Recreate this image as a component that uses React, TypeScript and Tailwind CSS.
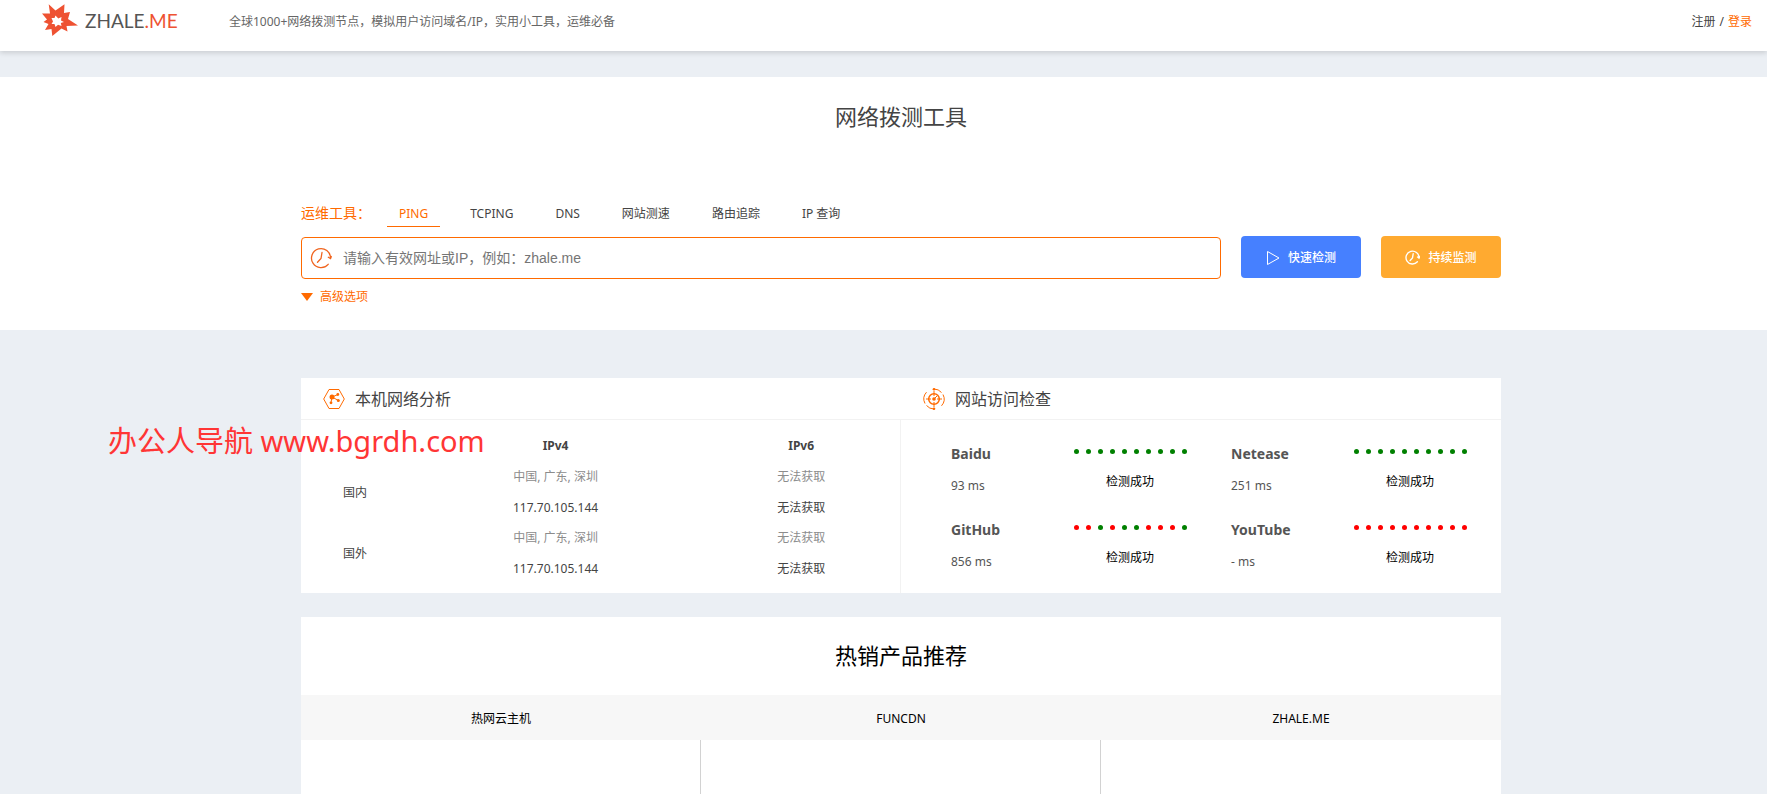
type SiteCheck = {
    name: string
    latency: string
    // one letter per probe: g = ok, r = failed
    probes: string
    status: string
}

const tools = ["PING", "TCPING", "DNS", "网站测速", "路由追踪", "IP 查询"]

const networks = [
    { region: "国内", v4Place: "中国, 广东, 深圳", v4: "117.70.105.144", v6Place: "无法获取", v6: "无法获取" },
    { region: "国外", v4Place: "中国, 广东, 深圳", v4: "117.70.105.144", v6Place: "无法获取", v6: "无法获取" },
]

const sites: SiteCheck[] = [
    { name: "Baidu", latency: "93 ms", probes: "gggggggggg", status: "检测成功" },
    { name: "Netease", latency: "251 ms", probes: "gggggggggg", status: "检测成功" },
    { name: "GitHub", latency: "856 ms", probes: "rrgrggrrrg", status: "检测成功" },
    { name: "YouTube", latency: "- ms", probes: "rrrrrrrrrr", status: "检测成功" },
]

const products = ["热网云主机", "FUNCDN", "ZHALE.ME"]

function StarLogo() {
    return (
        <svg viewBox="0 0 36 34" className="h-[34px] w-9" aria-hidden="true">
            <path
                fill="#ee5232"
                fillRule="evenodd"
                d="M6.700 .3 L13.500 6.500 L22.500 .3 L22 9 L28 8 L26 15 L36 21.500 L24.500 22 L25.500 27.500 L19.500 24.500 L10.300 32 L9.500 25 L3 26 L6.500 20 L1.500 18 L5 15.500 L0 9.500 L8 9.500 Z M13.500 11.500 L12.500 14 L9.500 14 L11 17.500 L9.500 20 L12.500 20 L13.500 23 L16 20.800 L19.500 22 L18.800 19 L22 18 L19 16.500 L19.500 13 L16.300 14.500 Z"
            />
        </svg>
    )
}

function ClockIcon({ className }: { className: string }) {
    return (
        <svg viewBox="0 0 22 22" className={className} fill="none" stroke="currentColor" strokeLinecap="round" aria-hidden="true">
            <path d="M18.200 17.300 A9.500 9.500 0 1 1 20.500 11.300" />
            <path d="M18.300 10.300 L20.500 11.600 L21.300 9.500" />
            <path d="M12 5.500 L11 11.500 L7.500 15.300" />
        </svg>
    )
}

function NetworkIcon() {
    return (
        <svg viewBox="0 0 22 22" className="size-[22px] text-[#ff6a00]" fill="none" stroke="currentColor" aria-hidden="true">
            <path d="M6 1.500 H16 L21.300 11 L16 20.500 H6 L.7 11 Z" />
            <path d="M9 9 L15 6.500 M9 9 L15.500 12.500 M9 9 L8 14.500" />
            <g fill="currentColor" stroke="none">
                <circle cx="9" cy="9" r="2.500" />
                <circle cx="14.800" cy="6.500" r="1.400" />
                <circle cx="15.300" cy="12.500" r="1.500" />
                <circle cx="8" cy="14.800" r="1.400" />
            </g>
        </svg>
    )
}

function TargetIcon() {
    return (
        <svg viewBox="0 0 22 22" className="size-[22px] text-[#ff6a00]" fill="none" stroke="currentColor" aria-hidden="true">
            <path d="M11 1 A10 10 0 0 1 18.500 4.500 M20 6.500 A10 10 0 0 1 18.500 17.800 M11 21 A10 10 0 0 1 3.500 17.500 M2 15.500 A10 10 0 0 1 3.500 4.200" />
            <circle cx="11" cy="11" r="5.300" strokeWidth="1.500" />
            <path d="M11 3 V8 M11 14 V19 M3 11 H8 M14 11 H19 M11 11 L14 8" />
            <g fill="currentColor" stroke="none">
                <circle cx="11" cy="11" r="1.800" />
                <circle cx="11" cy="1.300" r="1.300" />
                <circle cx="11" cy="20.700" r="1.300" />
            </g>
        </svg>
    )
}

function Header() {
    return (
        <header className="relative flex h-[51px] items-start justify-between bg-white pr-[15px] pl-[42px] shadow-[0_2px_5px_rgba(0,0,0,0.14)]">
            <div className="flex">
                <a href="#" className="mt-[5px] flex h-8 w-[187px] items-center gap-[7px] font-['Lato',sans-serif] text-[19px] text-[#555]">
                    <StarLogo />
                    <span>ZHALE<span className="text-[#ee5232]">.ME</span></span>
                </a>
                <p className="mt-3 leading-5 text-[#666]">
                    全球1000+网络拨测节点，模拟用户访问域名/IP，实用小工具，运维必备
                </p>
            </div>
            <nav className="mt-3 flex gap-1 leading-5">
                <a href="#register">注册</a>
                <span>/</span>
                <a href="#login" className="text-[#ff6a00]">登录</a>
            </nav>
        </header>
    )
}

function SearchPanel() {
    return (
        <section className="mt-[26px] h-[253px] bg-white pl-[35px]">
            <div className="mx-auto max-w-[1200px]">
                <h1 className="pt-[23px] text-center text-[22px] leading-8">网络拨测工具</h1>
                <div className="mt-[65px] flex items-center">
                    <span className="w-[86px] text-sm leading-8 text-[#ff6a00]">运维工具：</span>
                    <div className="flex gap-[18px]">
                        {tools.map((tool, i) => (
                            <button
                                key={tool}
                                className={`h-7 border-b px-3 pt-[3px] leading-6 ${i === 0 ? "border-[#ff6a00] text-[#ff6a00]" : "border-transparent"}`}
                            >
                                {tool}
                            </button>
                        ))}
                    </div>
                </div>
                <div className="mt-[7px] flex gap-5">
                    <label className="mt-px flex h-[42px] grow items-center gap-[11px] rounded border border-[#ff6a00] pl-2">
                        <ClockIcon className="size-[22px] stroke-[1.3] text-[#f0641e]" />
                        <input
                            type="text"
                            aria-label="网址或IP"
                            placeholder="请输入有效网址或IP，例如：zhale.me"
                            className="h-9 grow font-['Liberation_Sans','Noto_Sans_CJK_SC',sans-serif] text-sm outline-none placeholder:text-[#757575]"
                        />
                    </label>
                    <button className="flex h-[42px] w-[120px] items-center justify-center gap-2 rounded bg-[#4680ff] pt-px font-medium text-white">
                        <svg viewBox="0 0 14 16" className="h-4 w-3.5" fill="none" stroke="currentColor" aria-hidden="true">
                            <path d="M1.500 1.500 V14.500 L13 8 Z" />
                        </svg>
                        快速检测
                    </button>
                    <button className="flex h-[42px] w-[120px] items-center justify-center gap-2 rounded bg-[#ffaa30] pt-px font-medium text-white">
                        <ClockIcon className="size-[15px] stroke-2" />
                        持续监测
                    </button>
                </div>
                <button className="mt-2 flex items-center gap-[7px] leading-5 text-[#ff6a00]">
                    <svg viewBox="0 0 12 8" className="h-2 w-3" fill="currentColor" aria-hidden="true">
                        <path d="M0 0 H12 L6 8 Z" />
                    </svg>
                    高级选项
                </button>
            </div>
        </section>
    )
}

function NetworkAnalysis() {
    return (
        <section className="flex flex-col">
            <h2 className="flex h-[42px] items-center gap-2.5 border-b border-[#f2f2f2] pl-[22px] text-base">
                <NetworkIcon />
                本机网络分析
            </h2>
            <div className="grow border-r border-[#f2f2f2] pt-2.5">
                <table className="w-full table-fixed text-center leading-[30px]">
                    <colgroup>
                        <col className="w-[18%]" />
                        <col className="w-[49%]" />
                        <col />
                    </colgroup>
                    <thead>
                        <tr className="h-8">
                            <td />
                            <th>IPv4</th>
                            <th>IPv6</th>
                        </tr>
                    </thead>
                    {networks.map((net) => (
                        <tbody key={net.region}>
                            <tr className="text-[#8c8c8c]">
                                <th rowSpan={2} className="font-normal text-[#444]">{net.region}</th>
                                <td>{net.v4Place}</td>
                                <td>{net.v6Place}</td>
                            </tr>
                            <tr className="h-[31px]">
                                <td>{net.v4}</td>
                                <td>{net.v6}</td>
                            </tr>
                        </tbody>
                    ))}
                </table>
            </div>
        </section>
    )
}

function SiteChecks() {
    return (
        <section>
            <h2 className="flex h-[42px] items-center gap-2.5 border-b border-[#f2f2f2] pl-[22px] text-base">
                <TargetIcon />
                网站访问检查
            </h2>
            <div className="grid grid-cols-2 gap-y-7 pt-[22px] pl-10">
                {sites.map((site) => (
                    <div key={site.name} className="flex h-12 pl-2.5">
                        <div className="w-[109px]">
                            <h3 className="text-sm leading-6 font-bold text-[#555]">{site.name}</h3>
                            <p className="mt-2 leading-6 text-[#555]">{site.latency}</p>
                        </div>
                        <div className="flex w-[140px] flex-col items-center pt-[7px]">
                            <div className="flex gap-[7px]">
                                {site.probes.split("").map((probe, i) => (
                                    <span key={i} className={`size-[5px] rounded-full ${probe === "g" ? "bg-[#008000]" : "bg-[#ff0000]"}`} />
                                ))}
                            </div>
                            <p className="mt-4 leading-6 text-black">{site.status}</p>
                        </div>
                    </div>
                ))}
            </div>
        </section>
    )
}

function HotProducts() {
    return (
        <section className="mx-auto mt-6 flex w-full max-w-[1200px] grow flex-col bg-white text-black">
            <h2 className="h-[78px] text-center text-[22px] leading-[76px]">热销产品推荐</h2>
            <div className="grid h-[45px] grid-cols-3 bg-[#f7f7f7] text-center leading-[47px]">
                {products.map((product) => (
                    <span key={product}>{product}</span>
                ))}
            </div>
            <div className="grid grow grid-cols-3 divide-x divide-[#d2d2d2]">
                {products.map((product) => (
                    <div key={product} />
                ))}
            </div>
        </section>
    )
}

export default function App() {
    return (
        <div
            lang="zh-CN"
            className="relative flex min-h-screen flex-col bg-[#ebeff4] font-['Noto_Sans','Noto_Sans_CJK_SC',sans-serif] text-xs text-[#444]"
        >
            <Header />
            <SearchPanel />
            <main className="flex grow flex-col pt-12 pl-[35px]">
                <div className="mx-auto grid min-h-[215px] w-full max-w-[1200px] grid-cols-2 bg-white">
                    <NetworkAnalysis />
                    <SiteChecks />
                </div>
                <HotProducts />
            </main>
            <p className="absolute top-[420px] left-[108px] text-[29px] leading-[42px] text-[#ff3535]">
                办公人导航 www.bgrdh.com
            </p>
        </div>
    )
}
